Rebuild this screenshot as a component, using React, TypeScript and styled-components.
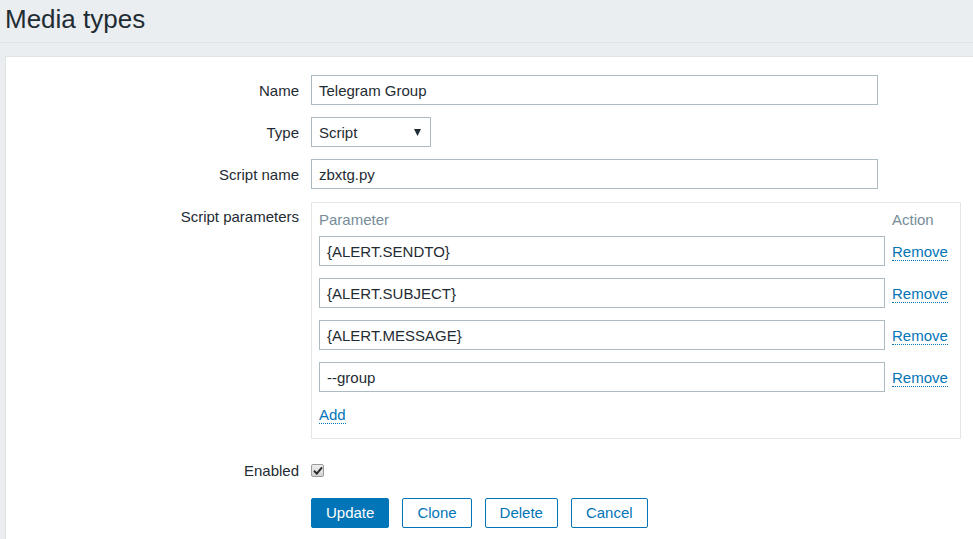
import React from "react";
import styled, { createGlobalStyle } from "styled-components";

const Global = createGlobalStyle`
  html, body { margin: 0; padding: 0; background: #ebeef0; overflow: hidden; }
  body { font-family: "Liberation Sans", Arial, sans-serif; color: #1f2c33; }
  * { box-sizing: border-box; }
`;

const Page = styled.div`
  width: 973px;
  height: 539px;
  overflow: hidden;
  background: #ebeef0;
`;

const Header = styled.header`
  height: 43px;
  padding: 6px 0 0 5px;
  border-bottom: 1px solid #dfe4e7;
`;

const Title = styled.h1`
  margin: 0;
  font-size: 26px;
  line-height: 26px;
  font-weight: normal;
  color: #1f2c33;
`;

const Panel = styled.main`
  margin: 13px -20px 0 5px;
  background: #ffffff;
  border: 1px solid #dfe4e7;
  padding-top: 18px;
  min-height: 600px;
`;

const Row = styled.div<{ $top?: number }>`
  display: grid;
  grid-template-columns: 293px 1fr;
  column-gap: 12px;
  margin-top: ${(p) => p.$top ?? 0}px;
  align-items: start;
`;

const Label = styled.label`
  text-align: right;
  font-size: 15px;
  height: 30px;
  line-height: 30px;
  padding-top: 1px;
  color: #1f2c33;
`;

const TextInput = styled.div<{ $w: number }>`
  width: ${(p) => p.$w}px;
  height: 30px;
  border: 1px solid #acbbc2;
  background: #fff;
  padding: 1px 7px 0;
  font-size: 15px;
  line-height: 27px;
  color: #1f2c33;
  white-space: nowrap;
  overflow: hidden;
`;

const Select = styled.div`
  width: 120px;
  height: 30px;
  border: 1px solid #acbbc2;
  background: #fff;
  padding: 1px 7px 0;
  font-size: 15px;
  line-height: 27px;
  display: flex;
  align-items: center;
  justify-content: space-between;
`;

const Arrow = styled.svg`
  margin-right: 2px;
`;

const ParamBox = styled.div`
  width: 650px;
  margin-top: 1px;
  border: 1px solid #e3e7ea;
  padding: 4px 13px 12px 7px;
`;

const ParamGrid = styled.div`
  display: grid;
  grid-template-columns: 566px 1fr;
  column-gap: 7px;
  row-gap: 12px;
  align-items: center;
`;

const ColHead = styled.div`
  font-size: 15px;
  height: 24px;
  line-height: 23px;
  padding-top: 1px;
  color: #768d99;
  margin-bottom: -7px;
`;

const Link = styled.a`
  justify-self: start;
  font-size: 15px;
  line-height: 17px;
  margin-top: 2px;
  color: #0275b8;
  text-decoration: none;
  border-bottom: 1px dotted #0275b8;
  cursor: pointer;
`;

const AddRow = styled.div`
  margin-top: 10px;
  height: 24px;
  display: flex;
  align-items: center;
`;

const CheckRow = styled.div`
  height: 30px;
  display: flex;
  align-items: center;
`;

const CheckBox = styled.span`
  width: 13px;
  height: 13px;
  margin-top: 1px;
  border: 1px solid #9a9a9a;
  border-radius: 2px;
  background: linear-gradient(#eeeeee, #d4d4d4);
  display: flex;
  align-items: center;
  justify-content: center;
`;

const Buttons = styled.div`
  display: flex;
  gap: 13px;
`;

const Button = styled.button<{ $primary?: boolean }>`
  height: 30px;
  padding: 0 14px;
  border: 1px solid #0275b8;
  border-radius: 2px;
  background: ${(p) => (p.$primary ? "#0275b8" : "#ffffff")};
  color: ${(p) => (p.$primary ? "#ffffff" : "#0275b8")};
  font-family: "Liberation Sans", Arial, sans-serif;
  font-size: 15px;
  line-height: 28px;
  cursor: pointer;
`;

const params = ["{ALERT.SENDTO}", "{ALERT.SUBJECT}", "{ALERT.MESSAGE}", "--group"];

export default function App() {
  return (
    <Page>
      <Global />
      <Header>
        <Title>Media types</Title>
      </Header>
      <Panel>
        <Row>
          <Label>Name</Label>
          <TextInput $w={567}>Telegram Group</TextInput>
        </Row>
        <Row $top={12}>
          <Label>Type</Label>
          <Select>
            <span>Script</span>
            <Arrow width="7" height="7" viewBox="0 0 7 7">
              <polygon points="0,0 7,0 3.5,7" fill="#1f2c33" />
            </Arrow>
          </Select>
        </Row>
        <Row $top={12}>
          <Label>Script name</Label>
          <TextInput $w={567}>zbxtg.py</TextInput>
        </Row>
        <Row $top={12}>
          <Label>Script parameters</Label>
          <ParamBox>
            <ParamGrid>
              <ColHead>Parameter</ColHead>
              <ColHead>Action</ColHead>
              {params.map((p) => (
                <React.Fragment key={p}>
                  <TextInput $w={566}>{p}</TextInput>
                  <Link>Remove</Link>
                </React.Fragment>
              ))}
            </ParamGrid>
            <AddRow>
              <Link>Add</Link>
            </AddRow>
          </ParamBox>
        </Row>
        <Row $top={16}>
          <Label>Enabled</Label>
          <CheckRow>
            <CheckBox>
              <svg width="10" height="9" viewBox="0 0 10 9">
                <path d="M1 4.8 L3.8 7.6 L9 1.4" stroke="#2b2b2b" strokeWidth="2" fill="none" />
              </svg>
            </CheckBox>
          </CheckRow>
        </Row>
        <Row $top={13}>
          <span />
          <Buttons>
            <Button $primary>Update</Button>
            <Button>Clone</Button>
            <Button>Delete</Button>
            <Button>Cancel</Button>
          </Buttons>
        </Row>
      </Panel>
    </Page>
  );
}
